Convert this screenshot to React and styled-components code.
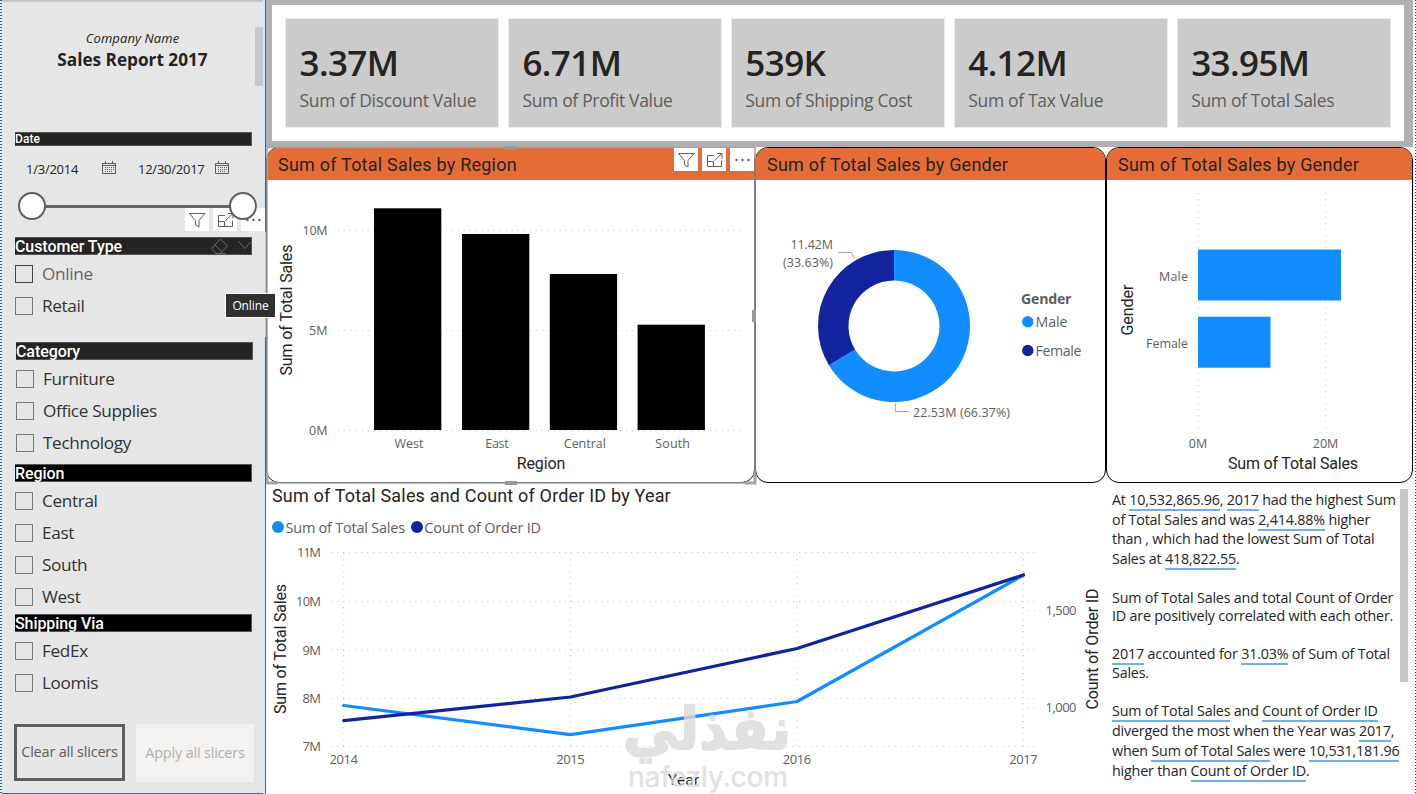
import React, { useState } from "react"
import styled, { createGlobalStyle, css } from "styled-components"

const GlobalStyle = createGlobalStyle`
  * {
    box-sizing: border-box;
  }

  body {
    margin: 0;
    background: white;
    overflow: hidden;
  }
`

const segoe = `"Open Sans", "Noto Sans", sans-serif`
const din = `Roboto, "Liberation Sans", sans-serif`

const blue = "#118DFF"
const navy = "#12239E"
const orange = "#E66C37"
const textGrey = "#605E5C"
const textDark = "#252423"

const Page = styled.div`
  position: relative;
  display: grid;
  grid-template-columns: 266px 1fr;
  width: 1416px;
  height: 794px;
  overflow: hidden;
  font-family: ${segoe};
  color: ${textDark};
`

/* ---------- slicer pane ---------- */

const Sidebar = styled.aside`
  position: relative;
  display: flex;
  flex-direction: column;
  height: 794px;
  padding: 0 12px 0 15px;
  background:
    repeating-linear-gradient(to bottom, #2a66a8 0 1px, #e4eef8 1px 3px) 0 0 / 2px 100% no-repeat,
    linear-gradient(to bottom, #b8b8b8, #e6e6e6) 0 0 / 100% 3px no-repeat,
    linear-gradient(#2f6da8, #2f6da8) 0 100% / 100% 1px no-repeat,
    linear-gradient(#c4c4c4, #c4c4c4) 100% 0 / 1px 100% no-repeat,
    #e6e6e6;
`

const PaneEdge = styled.div`
  position: absolute;
  right: 0;
  top: ${props => props.$top}px;
  height: ${props => props.$height}px;
  width: 3px;
  background: #d3e6f6;
  border-right: 1px solid #2471b0;
`

const PaneScroll = styled.div`
  position: absolute;
  right: 3px;
  top: 27px;
  width: 8px;
  height: 59px;
  background: #c8c8c8;
`

const ReportHead = styled.div`
  height: 132px;
  padding-top: 29px;
  padding-right: 4px;
  text-align: center;
`

const Company = styled.div`
  font-size: 13px;
  line-height: 18px;
  font-style: italic;
  letter-spacing: 0.1px;
`

const ReportName = styled.div`
  margin-top: 2px;
  font-size: 17.2px;
  line-height: 22px;
  font-weight: 700;
`

const SlicerHead = styled.div`
  position: relative;
  display: flex;
  align-items: center;
  flex: none;
  width: 237px;
  height: ${props => props.$small ? 14 : 18}px;
  background: ${props => props.$black ? "#000" : textDark};
  border: 1px solid #555;
  border-left: none;
  color: white;
  font-family: ${din};
  font-size: ${props => props.$small ? 12 : 16}px;
  font-weight: 500;
  letter-spacing: ${props => props.$small ? 0.1 : -0.08}px;
  white-space: nowrap;

  svg {
    position: absolute;
    top: 0;
    right: 0;
  }
`

const DateBlock = styled.section`
  height: 105px;
`

const DateRow = styled.div`
  display: flex;
  align-items: center;
  height: 18px;
  margin-top: 14px;
  padding-left: 11px;
  font-size: 13px;
  letter-spacing: -0.25px;

  svg {
    margin: -4px 22px 0 0;
  }
`

const DateText = styled.span`
  width: ${props => props.$width}px;
`

const Track = styled.div`
  position: relative;
  z-index: 2;
  display: flex;
  align-items: center;
  justify-content: space-between;
  width: 239px;
  height: 28px;
  margin: 14px 0 0 3px;
  background: linear-gradient(#666, #666) 10px 13px / 214px 3px no-repeat;
`

const Thumb = styled.span`
  width: 28px;
  height: 28px;
  border: 2px solid #605e5c;
  border-radius: 50%;
  background: white;
`

const HoverActions = styled.div`
  position: absolute;
  z-index: 1;
  right: ${props => props.$right}px;
  top: ${props => props.$top}px;
  display: flex;
  gap: 4px;
`

const ActionButton = styled.span`
  width: 24px;
  height: 23px;
  background: white;

  svg {
    display: block;
  }
`

const Slicer = styled.section`
  height: ${props => props.$height}px;
  margin-left: ${props => props.$shift || 0}px;
`

const Options = styled.div`
  padding-top: 10px;
`

const Option = styled.label`
  display: flex;
  align-items: center;
  gap: 9px;
  height: 18px;
  margin-bottom: 14px;
  font-size: 17.2px;
  line-height: 16px;
  letter-spacing: -0.35px;
  white-space: nowrap;
  color: ${props => props.$hover ? "#666" : "#333"};
`

const Box = styled.span`
  width: 18px;
  height: 18px;
  border: 1px solid ${props => props.$hover ? "#444" : "#7a7a7a"};
`

const Buttons = styled.div`
  display: flex;
  gap: 11px;
  margin-left: -1px;
`

const SlicerButton = styled.button`
  flex: none;
  width: 118px;
  height: 58px;
  padding: 0 0 2px;
  border: none;
  background: #f3f2f1;
  color: #b3b0ad;
  font-family: inherit;
  font-size: 14.5px;
  letter-spacing: -0.2px;
  white-space: nowrap;

  ${props => props.$outlined && css`
    width: 111px;
    height: 57px;
    border: 3px solid #605e5c;
    background: transparent;
    color: #605e5c;
  `}
`

const Tooltip = styled.div`
  position: absolute;
  z-index: 5;
  left: 225px;
  top: 293px;
  width: 51px;
  height: 25px;
  border: 1px solid white;
  background: #303030;
  color: white;
  font-size: 12px;
  line-height: 23px;
  text-align: center;
  letter-spacing: -0.1px;
`

/* ---------- report canvas ---------- */

const Canvas = styled.main`
  display: grid;
  grid-template-rows: 147px 336px 311px;
  width: 1150px;
  height: 794px;
  background:
    repeating-linear-gradient(to bottom, #444 0 1px, #fff 1px 3px) 100% 0 / 1px 100% no-repeat,
    white;
`

const KpiStrip = styled.section`
  display: flex;
  gap: 10.5px;
  width: 1147px;
  padding: 14px 14px;
  border: solid #b0b0b0;
  border-width: 5px 9px 6px 6px;
`

const Kpi = styled.div`
  width: 212.5px;
  height: 108px;
  padding: 21px 0 0 13.5px;
  background: #cbcbcb;
  box-shadow: 0 0 0 1px #ececec;
  white-space: nowrap;
`

const KpiValue = styled.div`
  font-size: 35px;
  line-height: 46px;
  font-weight: 600;
  letter-spacing: -0.6px;
`

const KpiLabel = styled.div`
  margin-top: 2px;
  font-size: 17.5px;
  line-height: 24px;
  letter-spacing: -0.33px;
  color: ${textGrey};
`

const VisualRow = styled.div`
  display: grid;
  grid-template-columns: 489px 351px 307px;
`

const Visual = styled.section`
  height: 336px;
  overflow: hidden;
  border: 1px solid ${props => props.$selected ? "#222" : "#000"};
  border-radius: 13px;
  background: white;

  > svg {
    display: block;
  }
`

const VisualTitle = styled.h2`
  height: 32px;
  margin: 0;
  padding-left: 11px;
  background: ${orange};
  font-family: ${din};
  font-size: 18px;
  font-weight: 400;
  line-height: 34px;
  letter-spacing: 0.22px;
`

const SelectionFrame = styled.svg`
  position: absolute;
  left: 266px;
  top: 146px;
`

const BottomRow = styled.div`
  display: grid;
  grid-template-columns: 846px 1fr;
`

const LinePanel = styled.section`
  padding: 2px 0 0 6px;
`

const LineTitle = styled.h2`
  height: 22px;
  margin: 0;
  font-family: ${din};
  font-size: 18px;
  font-weight: 400;
  line-height: 22px;
  letter-spacing: 0.18px;
`

const Legend = styled.div`
  display: flex;
  align-items: center;
  gap: 6px;
  height: 20px;
  margin: 10px 0 1px;
  font-size: 14.5px;
  letter-spacing: -0.23px;
  color: ${textGrey};
`

const LegendItem = styled.span`
  display: flex;
  align-items: center;
  gap: 1.5px;

  &::before {
    content: "";
    width: 12px;
    height: 12px;
    border-radius: 50%;
    background: ${props => props.$color};
  }
`

const LineSvg = styled.svg`
  display: block;
  margin-left: -6px;
`

const Narrative = styled.section`
  display: flex;
  justify-content: space-between;
  padding: 6px 8px 0 0;
`

const NarrativeText = styled.div`
  padding-top: 1px;
  font-size: 14.3px;
  letter-spacing: -0.19px;
  white-space: nowrap;
`

const Paragraph = styled.p`
  margin: 0 0 ${props => props.$gap || 0}px;
  line-height: ${props => props.$line}px;
`

const Value = styled.span`
  border-bottom: 2px solid #70b0ea;
`

const NarrativeScroll = styled.div`
  width: 8px;
  height: 193px;
  background: #c8c8c8;
`

const Watermark = styled.svg`
  position: absolute;
  left: 610px;
  top: 690px;
  z-index: 4;
`

/* ---------- data ---------- */

const kpis = [
  { value: "3.37M", label: "Sum of Discount Value" },
  { value: "6.71M", label: "Sum of Profit Value" },
  { value: "539K", label: "Sum of Shipping Cost" },
  { value: "4.12M", label: "Sum of Tax Value" },
  { value: "33.95M", label: "Sum of Total Sales" },
]

const slicers = [
  { name: "Customer Type", options: ["Online", "Retail"], height: 105, hover: true },
  { name: "Category", options: ["Furniture", "Office Supplies", "Technology"], height: 122, shift: 1 },
  { name: "Region", options: ["Central", "East", "South", "West"], height: 150, black: true },
  { name: "Shipping Via", options: ["FedEx", "Loomis"], height: 110, black: true },
]

const regions = [
  { name: "West", x: 374, top: 208.3, w: 29 },
  { name: "East", x: 462, top: 234, w: 23.5 },
  { name: "Central", x: 549.8, top: 274, w: 42 },
  { name: "South", x: 637.6, top: 324.7, w: 34.5 },
]

/* ---------- icons ---------- */

const FilterIcon = () => (
  <svg width="24" height="23" fill="none" stroke="#605e5c" strokeWidth="1">
    <path d="M4.5 5.5h15.5l-6 7v6.500l-3.500-2.200v-4.300z" />
  </svg>
)

const FocusIcon = () => (
  <svg width="24" height="23" fill="none" stroke="#605e5c" strokeWidth="1">
    <path d="M12 7.500H5.500v11h14v-6M5.500 13.500h6v5M12.500 12.500l7-6.500M15 5.500h5v5" />
  </svg>
)

const MoreIcon = () => (
  <svg width="24" height="23" fill="#605e5c">
    <circle cx="6.500" cy="12" r="1.200" />
    <circle cx="12.500" cy="12" r="1.200" />
    <circle cx="18.500" cy="12" r="1.200" />
  </svg>
)

const CalendarIcon = () => (
  <svg width="14" height="13" fill="none" stroke="#605e5c">
    <path d="M.5 2.500h13v10H.5zM.5 4.500h13M3.500 0v3M10.500 0v3" />
    <path d="M3 6.500h9M3 8.500h9M3 10.500h7" strokeDasharray="1 1" />
  </svg>
)

const SlicerHeadIcons = () => (
  <svg width="42" height="17" fill="none" stroke="#6a6a6a">
    <path d="M2.500 10.500l9-9.500 7 7-7.500 7.500h-4zM6 7l6.500 6.500M6.500 15.500h10" />
    <path d="M29.500 3.500l6.500 7L41.500 4" />
  </svg>
)

const Actions = ({ right, top }) => (
  <HoverActions $right={right} $top={top}>
    <ActionButton><FilterIcon /></ActionButton>
    <ActionButton><FocusIcon /></ActionButton>
    <ActionButton><MoreIcon /></ActionButton>
  </HoverActions>
)

/* ---------- charts ---------- */

const Label = ({ x, y, w, size = 12.5, anchor = "middle", fill = textGrey, font = segoe, weight, rotate, children }) => (
  <text
    x={x}
    y={y}
    textAnchor={anchor}
    textLength={w}
    fontSize={size}
    fontFamily={font}
    fontWeight={weight}
    fill={fill}
    transform={rotate ? `rotate(-90 ${x} ${y})` : undefined}
  >
    {children}
  </text>
)

const AxisTitle = (props) => <Label size={16} fill={textDark} font={din} {...props} />

const dots = { stroke: "#c4c4c4", strokeWidth: 1, strokeDasharray: "1 5" }

const RegionChart = () => (
  <svg width="487" height="302" viewBox="267 180 487 302">
    {[["10M", 230.5, 25], ["5M", 330.5, 18.5], ["0M", 430.5, 18.5]].map(([t, y, w]) => (
      <g key={t}>
        <path d={`M338 ${y}H743`} {...dots} />
        <Label x={327.5} y={y + 4.5} w={w} anchor="end">{t}</Label>
      </g>
    ))}
    {regions.map(r => (
      <g key={r.name}>
        <rect x={r.x} y={r.top} width="67.300" height={430 - r.top} fill="#000" />
        <Label x={r.x + 35} y={448} w={r.w}>{r.name}</Label>
      </g>
    ))}
    <AxisTitle x={541} y={469} w={48.5}>Region</AxisTitle>
    <AxisTitle x={292} y={310} w={131} rotate>Sum of Total Sales</AxisTitle>
  </svg>
)

const point = (r, share) => {
  const a = share * Math.PI * 2
  return `${894 + r * Math.sin(a)} ${326 - r * Math.cos(a)}`
}

const slice = (from, to) => {
  const big = to - from > 0.5 ? 1 : 0
  return `M${point(76, from)}A76 76 0 ${big} 1 ${point(76, to)}L${point(45.5, to)}A45.5 45.5 0 ${big} 0 ${point(45.5, from)}Z`
}

const DonutChart = () => (
  <svg width="349" height="302" viewBox="756 180 349 302">
    <path d={slice(0, 0.6637)} fill={blue} />
    <path d={slice(0.6637, 0.99999)} fill={navy} />
    <path d="M838 252.500h13.500l3.500 6.500M895.500 403.500v8H909" fill="none" stroke="#a6a6a6" />
    <Label x={833} y={249} w={42.500} anchor="end">11.42M</Label>
    <Label x={833} y={267} w={50} anchor="end">(33.63%)</Label>
    <Label x={913} y={417} w={97} anchor="start">22.53M (66.37%)</Label>
    <Label x={1021} y={304} w={50.500} size={14.2} weight={700} anchor="start">Gender</Label>
    <circle cx="1027.800" cy="321.700" r="5.700" fill={blue} />
    <Label x={1035.5} y={327} w={32} size={14.2} anchor="start">Male</Label>
    <circle cx="1027.800" cy="350.500" r="5.700" fill={navy} />
    <Label x={1035.5} y={356} w={46} size={14.2} anchor="start">Female</Label>
  </svg>
)

const GenderChart = () => (
  <svg width="305" height="302" viewBox="1107 180 305 302">
    <path d="M1198 193v240M1325.500 193v240" {...dots} />
    <rect x="1198" y="249.500" width="143" height="51" fill={blue} />
    <rect x="1198" y="316.700" width="72.500" height="51" fill={blue} />
    <Label x={1188} y={281} w={29} anchor="end">Male</Label>
    <Label x={1188} y={348} w={42} anchor="end">Female</Label>
    <Label x={1198} y={448} w={18.500}>0M</Label>
    <Label x={1325.5} y={448} w={25.500}>20M</Label>
    <AxisTitle x={1293} y={469} w={130}>Sum of Total Sales</AxisTitle>
    <AxisTitle x={1132.5} y={310} w={51} rotate>Gender</AxisTitle>
  </svg>
)

const years = [[2014, 343.7], [2015, 570.4], [2016, 797], [2017, 1023.5]]
const millions = [["11M", 552.5, 24], ["10M", 601.5, 25], ["9M", 650, 18.5], ["8M", 698.5, 18.5], ["7M", 746.5, 18.5]]

const YearChart = () => (
  <LineSvg width="846" height="256" viewBox="266 538 846 256">
    {millions.map(([t, y, w]) => (
      <g key={t}>
        <path d={`M331 ${y}H1036`} {...dots} />
        <Label x={321} y={y + 4.5} w={w} size={13} anchor="end">{t}</Label>
      </g>
    ))}
    {years.map(([t, x]) => (
      <g key={t}>
        <path d={`M${x} 553V747`} {...dots} />
        <Label x={x} y={764} w={28.5} size={13}>{t}</Label>
      </g>
    ))}
    <path d="M1028 610.500h8M1028 708h8" {...dots} />
    <Label x={1045.500} y={615} w={31} size={13} anchor="start">1,500</Label>
    <Label x={1045.500} y={712} w={31} size={13} anchor="start">1,000</Label>
    <g fill="none" strokeWidth="3.200" strokeLinecap="round" strokeLinejoin="round">
      <path d="M343.700 705.500L570.400 734.700L797 701.500L1023.500 575" stroke={blue} />
      <path d="M343.700 720.700L570.400 697L797 648.500L1023.500 575" stroke={navy} />
    </g>
    <AxisTitle x={286} y={649} w={130} rotate>Sum of Total Sales</AxisTitle>
    <AxisTitle x={1098} y={649} w={121} rotate>Count of Order ID</AxisTitle>
    <AxisTitle x={683.500} y={785} w={31} size={15}>Year</AxisTitle>
  </LineSvg>
)

const SlicerGroup = ({ slicer }) => {
  const [checked, setChecked] = useState(null)

  return (
    <Slicer $height={slicer.height} $shift={slicer.shift}>
      <SlicerHead $black={slicer.black}>
        {slicer.name}
        {slicer.hover && <SlicerHeadIcons />}
      </SlicerHead>
      <Options>
        {slicer.options.map((name, i) => (
          <Option key={name} $hover={slicer.hover && i === 0} onClick={() => setChecked(name)}>
            <Box $hover={slicer.hover && i === 0} $checked={checked === name} />
            {name}
          </Option>
        ))}
      </Options>
    </Slicer>
  )
}

const App = () => {
  return (
    <Page>
      <GlobalStyle />
      <Sidebar>
        <PaneEdge $top={0} $height={232} />
        <PaneEdge $top={337} $height={457} />
        <PaneScroll />
        <ReportHead>
          <Company>Company Name</Company>
          <ReportName>Sales Report 2017</ReportName>
        </ReportHead>
        <DateBlock>
          <SlicerHead $small>Date</SlicerHead>
          <DateRow>
            <DateText $width={76}>1/3/2014</DateText>
            <CalendarIcon />
            <DateText $width={77}>12/30/2017</DateText>
            <CalendarIcon />
          </DateRow>
          <Track>
            <Thumb />
            <Thumb />
          </Track>
        </DateBlock>
        <Actions right={1} top={208} />
        {slicers.map(s => <SlicerGroup key={s.name} slicer={s} />)}
        <Buttons>
          <SlicerButton $outlined>Clear all slicers</SlicerButton>
          <SlicerButton>Apply all slicers</SlicerButton>
        </Buttons>
      </Sidebar>

      <Canvas>
        <KpiStrip>
          {kpis.map(k => (
            <Kpi key={k.label}>
              <KpiValue>{k.value}</KpiValue>
              <KpiLabel>{k.label}</KpiLabel>
            </Kpi>
          ))}
        </KpiStrip>

        <VisualRow>
          <Visual $selected>
            <VisualTitle>Sum of Total Sales by Region</VisualTitle>
            <RegionChart />
          </Visual>
          <Visual>
            <VisualTitle>Sum of Total Sales by Gender</VisualTitle>
            <DonutChart />
          </Visual>
          <Visual>
            <VisualTitle>Sum of Total Sales by Gender</VisualTitle>
            <GenderChart />
          </Visual>
        </VisualRow>

        <BottomRow>
          <LinePanel>
            <LineTitle>Sum of Total Sales and Count of Order ID by Year</LineTitle>
            <Legend>
              <LegendItem $color={blue}>Sum of Total Sales</LegendItem>
              <LegendItem $color={navy}>Count of Order ID</LegendItem>
            </Legend>
            <YearChart />
          </LinePanel>
          <Narrative>
            <NarrativeText>
              <Paragraph $line={19.7} $gap={20}>
                At <Value>10,532,865.96</Value>, <Value>2017</Value> had the highest Sum<br />
                of Total Sales and was <Value>2,414.88%</Value> higher<br />
                than , which had the lowest Sum of Total<br />
                Sales at <Value>418,822.55</Value>.
              </Paragraph>
              <Paragraph $line={18.5} $gap={18}>
                Sum of Total Sales and total Count of Order<br />
                ID are positively correlated with each other.
              </Paragraph>
              <Paragraph $line={19.6} $gap={18}>
                <Value>2017</Value> accounted for <Value>31.03%</Value> of Sum of Total<br />
                Sales.
              </Paragraph>
              <Paragraph $line={20}>
                <Value>Sum of Total Sales</Value> and <Value>Count of Order ID</Value><br />
                diverged the most when the Year was <Value>2017</Value>,<br />
                when <Value>Sum of Total Sales</Value> were <Value>10,531,181.96</Value><br />
                higher than <Value>Count of Order ID</Value>.
              </Paragraph>
            </NarrativeText>
            <NarrativeScroll />
          </Narrative>
        </BottomRow>
      </Canvas>

      <SelectionFrame width="491" height="340" fill="none" stroke="#a3a3a3">
        <path d="M1 1.500h488v335.500H1z" strokeWidth="1.500" />
        <path d="M1 328v9h10M479 337h10v-9" strokeWidth="3" />
        <path d="M239 337h12M239 1.500h12M488 164v12" strokeWidth="4" stroke="#999" />
      </SelectionFrame>
      <Actions right={662} top={148} />
      <Tooltip>Online</Tooltip>

      <Watermark width="195" height="104" fill="#dadada" opacity="0.800">
        <text x="97" y="59" textAnchor="middle" textLength="168" lengthAdjust="spacingAndGlyphs" direction="rtl" fontFamily="DejaVu Sans" fontWeight="700" fontSize="58" stroke="#dadada" strokeWidth="2" strokeLinejoin="round">نفذلي</text>
        <text x="18" y="97" textLength="160" fontFamily="Inter, sans-serif" fontWeight="500" fontSize="28">nafezly.com</text>
      </Watermark>
    </Page>
  )
}

export default App
